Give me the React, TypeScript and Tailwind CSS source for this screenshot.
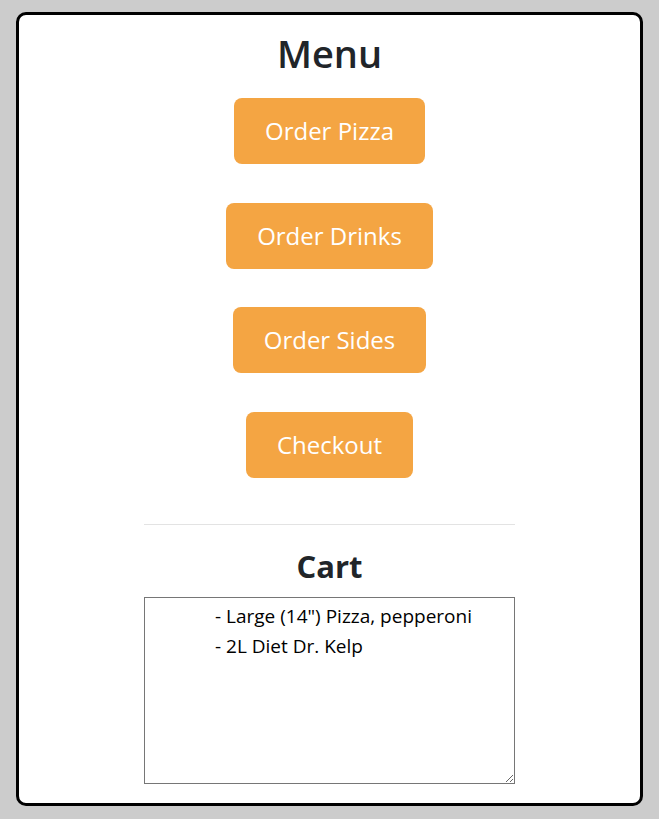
const buttons = ["Order Pizza", "Order Drinks", "Order Sides", "Checkout"];

const cartText = `- Large (14") Pizza, pepperoni
- 2L Diet Dr. Kelp`;

export default function App() {
  return (
    <div className="min-h-screen bg-[#cccccc] px-4 pt-3 pb-[13px] font-['Open_Sans',sans-serif]">
      <div className="flex flex-col items-center rounded-[10px] border-[3px] border-black bg-white pt-[14px] pb-[19px]">
        <h1 className="text-[38px] leading-[48px] font-semibold text-[#212529]">Menu</h1>

        <div className="mt-[21px] flex flex-col items-center gap-[38.5px]">
          {buttons.map((label) => (
            <button
              key={label}
              className="h-[66px] rounded-lg bg-[#f4a543] px-[31px] text-[24px] text-white"
            >
              {label}
            </button>
          ))}
        </div>

        <hr className="mt-[46px] w-[371px] border-t border-[#e3e3e3]" />

        <h2 className="mt-[21px] text-[31px] leading-[40px] font-bold text-[#212529]">Cart</h2>

        <textarea
          readOnly
          value={cartText}
          className="mt-[11px] h-[187px] w-[371px] border border-[#767676] pt-[3px] pl-[70px] text-[19px] leading-[30px] text-black"
        />
      </div>
    </div>
  );
}
